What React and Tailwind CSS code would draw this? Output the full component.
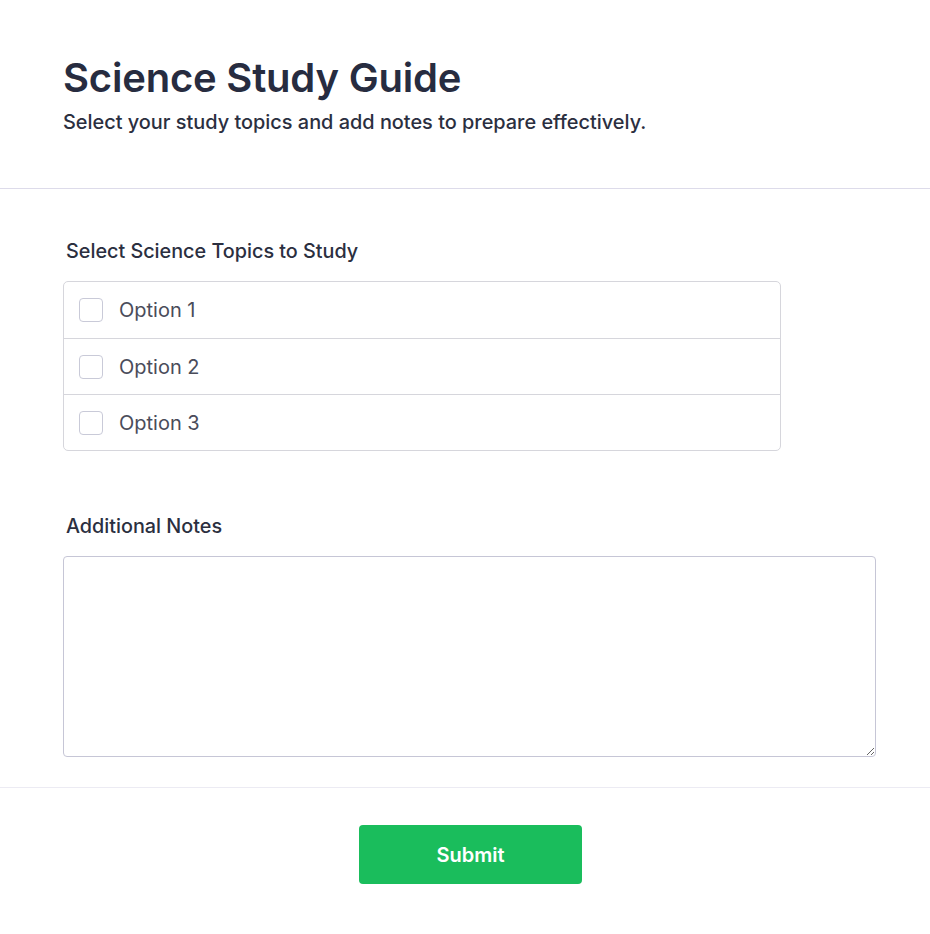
import React from "react";

export default function App() {
  const options = ["Option 1", "Option 2", "Option 3"];
  return (
    <div className="min-h-[934px] w-full bg-white" style={{ fontFamily: "Inter, 'Noto Sans', sans-serif" }}>
      <header className="px-[63px] pt-[56px] pb-[52px] border-b border-[#dddbea]">
        <h1 className="text-[40px] leading-[44px] font-semibold text-[#272c40] tracking-[-0.2px]">Science Study Guide</h1>
        <p className="mt-[8px] text-[19.9px] leading-[28px] font-medium text-[#2b2f3f]">
          Select your study topics and add notes to prepare effectively.
        </p>
      </header>
      <section className="px-[63px] pt-[48px] pb-[30px] border-b border-[#ecebf3]">
        <div className="pl-[3px] text-[19.8px] leading-[28px] font-medium text-[#2b2f3f]">Select Science Topics to Study</div>
        <div className="mt-[16px] w-[718px] rounded-[5px] border border-[#d6d6dc]">
          {options.map((o, i) => (
            <label
              key={o}
              className={`flex h-[56px] items-center gap-[16px] px-[15px] ${i > 0 ? "border-t border-[#d6d6dc]" : ""}`}
            >
              <span className="h-[24px] w-[24px] shrink-0 rounded-[4px] border border-[#c9cad8] bg-white"></span>
              <span className="text-[20px] text-[#4a4c5a]">{o}</span>
            </label>
          ))}
        </div>
        <div className="mt-[61px] pl-[3px] text-[19.8px] leading-[28px] font-medium text-[#2b2f3f]">Additional Notes</div>
        <textarea
          className="mt-[16px] block h-[201px] w-[813px] rounded-[4px] border border-[#c6c6d6] outline-none"
        ></textarea>
      </section>
      <div className="flex pt-[37px] pl-[64px]">
        <div className="flex w-[813px] shrink-0 justify-center">
          <button className="h-[59px] w-[223px] rounded-[4px] bg-[#1abd5c] text-[20px] font-semibold text-white">
            Submit
          </button>
        </div>
      </div>
    </div>
  );
}
